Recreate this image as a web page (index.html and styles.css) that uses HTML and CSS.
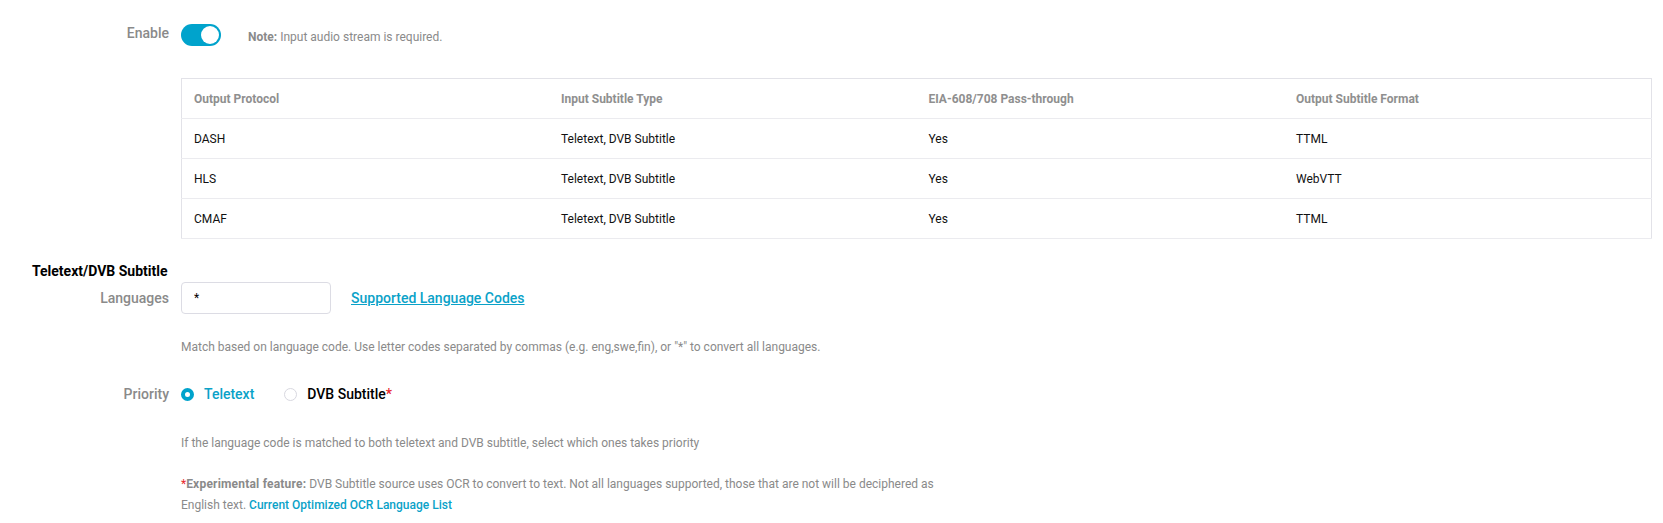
FILE: index.html
```html
<!DOCTYPE html>
<html>
<head>
<meta charset="utf-8">
<link rel="stylesheet" href="styles.css">
</head>
<body>
<div class="page">
  <div class="row row-enable">
    <div class="label">Enable</div>
    <div class="ctrl">
      <span class="toggle"><span class="knob"></span></span>
      <span class="note"><b>Note:</b> Input audio stream is required.</span>
    </div>
  </div>

  <div class="row row-table">
    <div class="label"></div>
    <div class="ctrl">
      <table class="tbl">
        <thead>
          <tr><th>Output Protocol</th><th>Input Subtitle Type</th><th>EIA-608/708 Pass-through</th><th>Output Subtitle Format</th></tr>
        </thead>
        <tbody>
          <tr><td>DASH</td><td>Teletext, DVB Subtitle</td><td>Yes</td><td>TTML</td></tr>
          <tr><td>HLS</td><td>Teletext, DVB Subtitle</td><td>Yes</td><td>WebVTT</td></tr>
          <tr><td>CMAF</td><td>Teletext, DVB Subtitle</td><td>Yes</td><td>TTML</td></tr>
        </tbody>
      </table>
    </div>
  </div>

  <div class="section-title">Teletext/DVB Subtitle</div>

  <div class="row row-lang">
    <div class="label">Languages</div>
    <div class="ctrl">
      <input class="input" type="text" value="*">
      <a class="link" href="#">Supported Language Codes</a>
    </div>
  </div>
  <div class="row help-lang">
    <div class="label"></div>
    <div class="ctrl help">Match based on language code. Use letter codes separated by commas (e.g. eng,swe,fin), or "*" to convert all languages.</div>
  </div>

  <div class="row row-priority">
    <div class="label">Priority</div>
    <div class="ctrl">
      <span class="radio checked"></span><span class="radio-label active">Teletext</span>
      <span class="radio"></span><span class="radio-label">DVB Subtitle<span class="req">*</span></span>
    </div>
  </div>
  <div class="row help-priority">
    <div class="label"></div>
    <div class="ctrl help">If the language code is matched to both teletext and DVB subtitle, select which ones takes priority</div>
  </div>
  <div class="row help-exp">
    <div class="label"></div>
    <div class="help exp"><span class="req">*</span><b>Experimental feature:</b> DVB Subtitle source uses OCR to convert to text. Not all languages supported, those that are not will be deciphered as English text. <a class="link-small" href="#">Current Optimized OCR Language List</a></div>
  </div>
</div>
</body>
</html>
```

FILE: styles.css
```css
* { box-sizing: border-box; }
html, body { margin: 0; padding: 0; background: #fff; }
body {
  font-family: Roboto, "Liberation Sans", Arial, sans-serif;
  color: #000;
  font-size: 12px;
}
.page { padding-top: 24px; width: 1663px; }
.row { display: flex; align-items: center; }
.label {
  width: 169px;
  flex: none;
  text-align: right;
  font-size: 14px;
  font-weight: 500;
  color: #8a8a8a;
  margin-right: 12px;
}
.ctrl { display: flex; align-items: center; flex: 1; }

.row-enable { height: 22px; }
.row-enable .label { margin-top: -4px; }
.toggle {
  width: 40px; height: 22px;
  border-radius: 11px;
  background: #00a3cc;
  position: relative;
  flex: none;
}
.knob {
  position: absolute;
  right: 2px; top: 2px;
  width: 18px; height: 18px;
  border-radius: 50%;
  background: #fff;
}
.note { margin-left: 27px; color: #8a8a8a; font-size: 12px; margin-top: 3px; }
.note b { font-weight: 700; }

.row-table { margin-top: 32px; }
.tbl {
  width: 1471px;
  border-collapse: collapse;
  border: 1px solid #e2e2e8;
  table-layout: fixed;
}
.tbl th, .tbl td {
  text-align: left;
  height: 40px;
  padding: 0 12px;
  font-size: 12px;
  border-bottom: 1px solid #ebebef;
  width: 25%;
}
.tbl th { color: #8f8f8f; font-weight: 700; }
.tbl td { color: #111; }

.section-title {
  margin-top: 24px;
  padding-left: 32px;
  font-size: 14px;
  font-weight: 700;
  color: #000;
  height: 16px;
  line-height: 16px;
}
.row-lang { margin-top: 3px; }
.input {
  width: 150px; height: 32px;
  border: 1px solid #dcdce4;
  border-radius: 4px;
  padding: 0 12px;
  font-family: Roboto, "Liberation Sans", Arial, sans-serif;
  font-size: 12px;
  color: #000;
  outline: none;
}
.link {
  margin-left: 20px;
  color: #0aa2c8;
  font-size: 14px;
  text-decoration: underline;
  font-weight: 500;
}
.help { color: #8a8a8a; font-size: 12px; line-height: 20px; }
.help-lang { margin-top: 23px; }

.row-priority { margin-top: 27px; height: 20px; }
.radio {
  width: 13px; height: 13px;
  border-radius: 50%;
  border: 1px solid #d8d8e0;
  flex: none;
  margin-right: 10px;
}
.radio.checked {
  border: 4px solid #00a3cc;
  background: #fff;
}
.radio-label { font-size: 14px; font-weight: 500; color: #000; margin-right: 30px; }
.radio-label.active { color: #0aa2c8; }
.req { color: #e8262b; }

.help-priority { margin-top: 29px; }
.help-exp { margin-top: 21px; }
.exp { flex: none; display: block; width: 765px; line-height: 21px; }
.exp b { font-weight: 700; letter-spacing: 0.2px; }
.link-small { color: #0aa2c8; font-weight: 500; text-decoration: none; }
```
